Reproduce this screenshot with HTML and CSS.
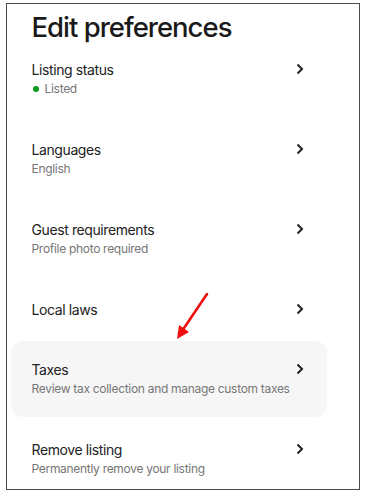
FILE: index.html
```html
<!DOCTYPE html>
<html>

<head>
    <title>Edit preferences</title>
    <link rel="stylesheet" href="styles.css">
</head>

<body>
    <div class="frame">
        <h1>Edit preferences</h1>

        <ul class="prefs">
            <li class="row">
                <div class="text">
                    <span class="label">Listing status</span>
                    <span class="sub"><i class="dot"></i>Listed</span>
                </div>
                <svg class="chev" width="8" height="12" viewBox="0 0 8 12"><path d="M1.5 1.5L6 6l-4.5 4.5" /></svg>
            </li>
            <li class="row">
                <div class="text">
                    <span class="label">Languages</span>
                    <span class="sub">English</span>
                </div>
                <svg class="chev" width="8" height="12" viewBox="0 0 8 12"><path d="M1.5 1.5L6 6l-4.5 4.5" /></svg>
            </li>
            <li class="row">
                <div class="text">
                    <span class="label">Guest requirements</span>
                    <span class="sub">Profile photo required</span>
                </div>
                <svg class="chev" width="8" height="12" viewBox="0 0 8 12"><path d="M1.5 1.5L6 6l-4.5 4.5" /></svg>
            </li>
            <li class="row short">
                <div class="text">
                    <span class="label">Local laws</span>
                </div>
                <svg class="chev" width="8" height="12" viewBox="0 0 8 12"><path d="M1.5 1.5L6 6l-4.5 4.5" /></svg>
            </li>
            <li class="row active">
                <div class="text">
                    <span class="label">Taxes</span>
                    <span class="sub">Review tax collection and manage custom taxes</span>
                </div>
                <svg class="chev" width="8" height="12" viewBox="0 0 8 12"><path d="M1.5 1.5L6 6l-4.5 4.5" /></svg>
            </li>
            <li class="row">
                <div class="text">
                    <span class="label">Remove listing</span>
                    <span class="sub">Permanently remove your listing</span>
                </div>
                <svg class="chev" width="8" height="12" viewBox="0 0 8 12"><path d="M1.5 1.5L6 6l-4.5 4.5" /></svg>
            </li>
        </ul>

        <!-- annotation arrow pointing at the Taxes row -->
        <svg class="pointer" width="40" height="50" viewBox="0 0 40 50">
            <path d="M32 3L7 40" stroke="#f01010" stroke-width="2.6" stroke-linecap="round" fill="none" />
            <path d="M2 48L4 34L14 41Z" fill="#f01010" />
        </svg>
    </div>
</body>

</html>
```

FILE: styles.css
```css
* {
    margin: 0;
    padding: 0;
    box-sizing: border-box;
}

body {
    background-color: #fff;
    font-family: Inter, "Noto Sans", sans-serif;
    color: #222;
}

.frame {
    position: relative;
    margin: 3px 0 0 6px;
    width: 354px;
    height: 487px;
    border: 1.5px solid #4a4a4a;
    overflow: hidden;
    padding: 0 0 0 3.5px;
}

h1 {
    font-size: 27.5px;
    font-weight: 500;
    letter-spacing: -1px;
    line-height: 36px;
    padding: 5px 0 0 21px;
    color: #1a1a1a;
}

.prefs {
    list-style: none;
    display: flex;
    flex-direction: column;
    gap: 4px;
    width: 316px;
    margin-top: -4px;
}

.row {
    height: 76px;
    display: flex;
    align-items: center;
    justify-content: space-between;
    padding: 0 23px 0 21px;
    border-radius: 12px;
}

.row.short {
    height: 56px;
}

.row.active {
    background-color: #f6f6f6;
}

.text {
    display: flex;
    flex-direction: column;
    gap: 3px;
}

.label {
    font-size: 14px;
    line-height: 17px;
    letter-spacing: -0.4px;
    color: #222;
}

.sub {
    font-size: 12px;
    line-height: 16px;
    letter-spacing: -0.3px;
    color: #767676;
    display: flex;
    align-items: center;
    white-space: nowrap;
}

.dot {
    width: 6px;
    height: 6px;
    border-radius: 50%;
    background-color: #0a9a1e;
    margin: 0 6px 0 1px;
}

.chev {
    margin-top: -20px;
}

.short .chev {
    margin-top: 0;
}

.chev path {
    fill: none;
    stroke: #222;
    stroke-width: 2;
}

.pointer {
    position: absolute;
    left: 168px;
    top: 287px;
}
```
